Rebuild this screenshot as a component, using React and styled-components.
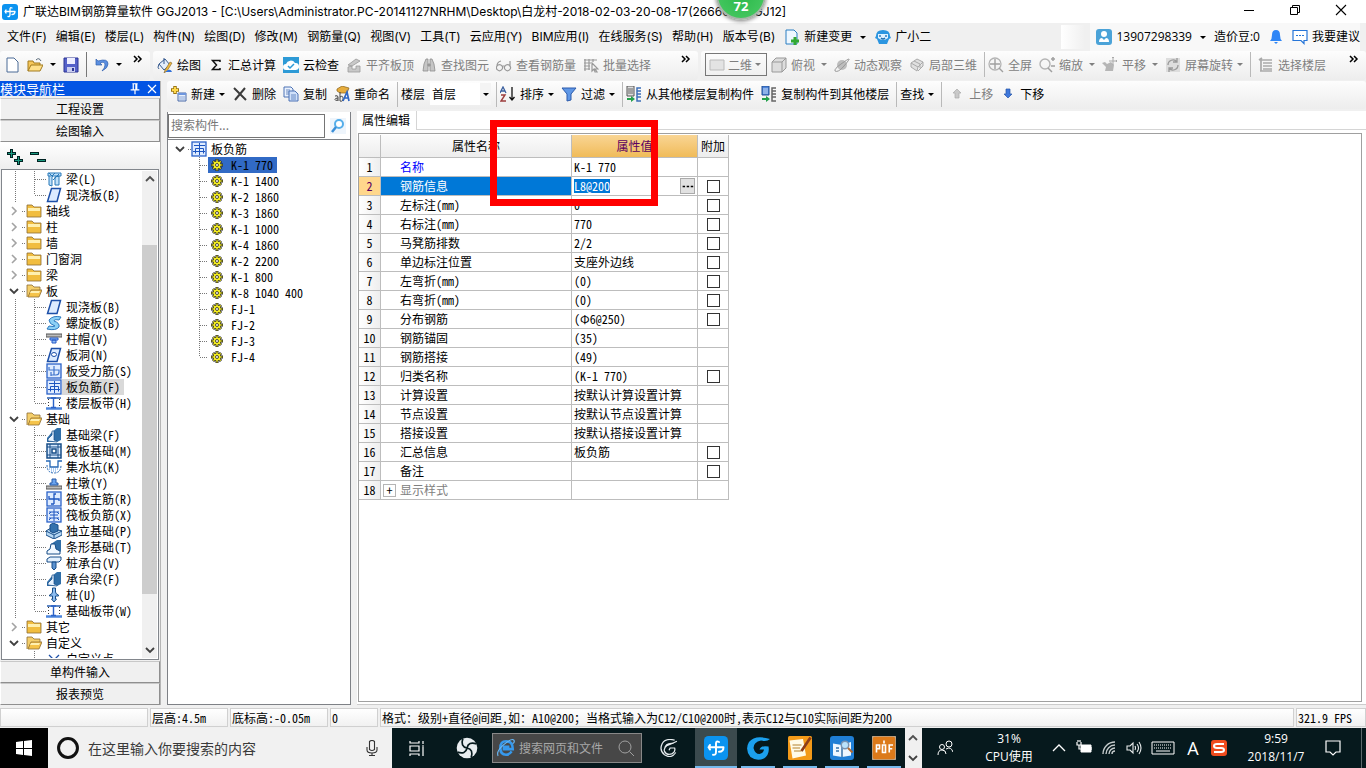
import { useState } from 'react'
import styled, { createGlobalStyle, css } from 'styled-components'

const fonts = {
  ui: '"Open Sans", "Noto Sans CJK SC", sans-serif',
  cjk: '"Noto Sans CJK SC", sans-serif',
  title: 'Inter, "Noto Sans CJK SC", sans-serif',
}

const GlobalStyle = createGlobalStyle`
  * { box-sizing: border-box; }
  body { margin: 0; background: #f0f0f0; overflow: hidden; }
  button, input, select {
    font: inherit;
    color: inherit;
    border: 0;
    padding: 0;
    margin: 0;
    background: none;
    border-radius: 0;
    outline: none;
  }
  ul { list-style: none; margin: 0; padding: 0; }
`

/* ---------- icons ---------- */

const slab = <path d="M5.500 1.500h9l-3.500 13H1.500z" fill="#dcebff" stroke="#1c4fa8" strokeWidth="1.500" />
const frame = <rect x="1" y="1" width="14" height="14" fill="#dfecff" stroke="#2a62c8" strokeWidth="1.300" />
const g = '#b4b4b4'

const drawings = {
  app: <><rect width="16" height="16" rx="3" fill="#0b93f0" /><path d="M10 4Q8 3 8 5v5.500Q8 13 6 12.500M3 7.500h10M4 6q-1.500 1.500 0 3M13 7.500q0 3-3 3" fill="none" stroke="#fff" strokeWidth="1.300" strokeLinecap="round" strokeLinejoin="round" /></>,
  file: <path d="M3 1h7l4 4v10H3z" fill="#fff" stroke="#4b6a96" />,
  open: <><path d="M1 14V4h5l1 2h6v3" fill="#f6c75a" stroke="#a17a1e" /><path d="M1 14l3-6h12l-3 6z" fill="#ffe08a" stroke="#a17a1e" /><path d="M9 3q3-3 5 1" fill="none" stroke="#567" /></>,
  save: <><path d="M1 1h14v14H1z" fill="#5561c9" stroke="#2c3593" /><path d="M4 1h8v6H4z" fill="#eef" /><path d="M4 10h8v5H4z" fill="#c9cdf0" /><path d="M9 11h2v3H9z" fill="#2c3593" /></>,
  undo: <path d="M2 2v6h6L6 6q5-2 5 2 0 3-3 6 6-3 6-7 0-6-10-3z" fill="#5b8fe0" stroke="#2f5fae" strokeWidth=".7" />,
  paint: <><path d="M2 7l6-5 5 6-6 5z" fill="#e4eefb" stroke="#35598f" /><path d="M7 1v6M2 7q-2 4 0 5" fill="none" stroke="#35598f" /><path d="M15 6l-5 8-3 2 1-3 5-8z" fill="#f0b93c" stroke="#7d5f2a" strokeWidth=".6" /><path d="M11 13q3-1 4 2H8z" fill="#2f6fd8" /></>,
  sigma: <path d="M12 5V3.500H4.500L8.500 8l-4 4.500H12V11" fill="none" stroke="#111" strokeWidth="1.500" />,
  cloud: <><path d="M0 0h16v16H0z" fill="#2d9ad6" /><path d="M3 13a3 3 0 0 1 0-6 5 5 0 0 1 9-1 3.500 3.500 0 0 1 1 7z" fill="#fff" /><path d="M5 9l2 2 4-4" fill="none" stroke="#2d9ad6" strokeWidth="1.500" /></>,
  align: <path d="M2 8l8-6 4 2-8 5zM2 10v5h12V9h-4v3H6v-3z" fill="#c8c8c8" stroke="#999" strokeWidth=".8" />,
  binoc: <path d="M2 14l1-7 2-5h2v12zM9 14V2h2l2 5 1 7zM7 7h2v2H7z" fill="#c6c6c6" stroke="#8d8d8d" strokeWidth=".8" />,
  glasses: <path d="M5 4Q1 5 1 9a3 3 0 1 0 5 0 3 3 0 0 0-5 0M9 9a3 3 0 1 0 5 0 3 3 0 0 0-5 0M14 10V4M6 9h3" fill="none" stroke="#999" strokeWidth="1.200" />,
  batch: <path d="M2 2v12M1 3h13M1 6h7M1 9h6M1 12h6M6 2v11M10 2v3M9 6l6 6-3 0 2 3-2 0-1-3-2 2z" fill="none" stroke="#999" strokeWidth="1.200" />,
  rect: <path d="M1 3h14v10H1z" fill="#e3e3e3" stroke="#bbb" />,
  cube: <path d="M1 5l4-4h10v10l-4 4H1zM1 5h10v10M11 5l4-4" fill="#ddd" stroke="#999" />,
  orbit: <><circle cx="8" cy="8" r="5" fill="#bdbdbd" /><path d="M1 14Q0 12 7 7T15 2t-5 7-9 5" fill="none" stroke="#999" /></>,
  cube2: <path d="M2 6l6-4 6 3-5 5zM2 6v4l6 4 1-4M9 14l5-5V5M5 4l6 3v4" fill="#e0e0e0" stroke="#aaa" />,
  full: <><circle cx="7" cy="7" r="6" fill="none" stroke={g} strokeWidth="1.300" /><path d="M7 2v10M2 7h10M11 11l4 4" stroke="#a0a0a0" strokeWidth="1.400" /></>,
  zoom: <><circle cx="6" cy="7" r="5" fill="none" stroke={g} strokeWidth="1.400" /><path d="M9 11l4 4M12 2h4M14 0v4M12 9h4" stroke="#a0a0a0" strokeWidth="1.500" /></>,
  pan: <><path d="M0 6l3-1 2 2 4-2 3 3-1 6H3l1-4z" fill="#b6b6b6" /><path d="M11 0v8M7 4h8M10 1l1-1 1 1M14 3l1 1-1 1" fill="none" stroke="#aaa" /></>,
  rotate: <><path d="M1 1h14v14H1z" fill="#ddd" /><path d="M3 8a5 5 0 0 1 9-3M13 8a5 5 0 0 1-9 3M12 1v4H8M4 15v-4h4" fill="none" stroke="#999" strokeWidth="1.300" /></>,
  floors: <path d="M3 3h11M1 3l3-2M5 6h9M5 9h9M5 12h9M2 14h12M3 3v11" stroke="#aaa" strokeWidth="1.700" fill="none" />,
  create: <><path d="M4 0v8M0 4h8" stroke="#9a7510" strokeWidth="3.500" /><path d="M4 1v6M1 4h6" stroke="#ffd84a" strokeWidth="2" /><path d="M7 7h8v8H7z" fill="#e8f0fc" stroke="#4a6ba8" /><path d="M7 7h8v2H7z" fill="#6e96de" /><path d="M8 11h6M8 13h6" stroke="#8aa6d8" /></>,
  cross: <path d="M2 2l12 12M13 2L3 14" stroke="#3c3c3c" strokeWidth="2" />,
  copy: <><path d="M1 1h7l2 2v8H1z" fill="#e9f1fd" stroke="#4d73b5" /><path d="M6 5h6l3 3v7H6z" fill="#cfe0fa" stroke="#4d73b5" /><path d="M8 9h5M8 11h5M8 13h5M3 4h4M3 6h3M3 8h3" stroke="#4d73b5" strokeWidth=".8" /></>,
  rename: <><path d="M3 3l5-3 7 2-2 5-7 0-3-2z" fill="#e7ad3d" stroke="#866018" strokeWidth=".7" /><path d="M1 10q3-1 3 1v4M4 12q-3 0-3 1.500T4 14M6 6v9M6 11q3-2 3 1.500T6 15" fill="none" stroke="#444" /><path d="M9 15l4-9 2 9M10 12h5" fill="none" stroke="#2f66c4" strokeWidth="1.700" /></>,
  sort: <><path d="M0 7l3-6 3 6M1 5h4" fill="none" stroke="#3a5f9e" strokeWidth="1.300" /><path d="M1 9h4l-4 6h5" fill="none" stroke="#9c3d3d" strokeWidth="1.400" /><path d="M12 1v12M9.500 11l2.500 3 2.500-3" fill="none" stroke="#111" strokeWidth="1.300" /></>,
  filter: <path d="M1 2h14L10 8v6l-4 1V8z" fill="#5f97e6" stroke="#2c5bab" />,
  from: <><path d="M1 0h7v10H1z" fill="#ddd" stroke="#555" /><path d="M2 3h5M2 5h5M2 7h5" stroke="#666" /><path d="M15 2h-4v13h4M11 5h4M11 8h4M11 11h4" fill="none" stroke="#3d6fb8" strokeWidth="1.500" /><path d="M1 12h4v-2l4 3-4 3v-2H1z" fill="#23a04b" /></>,
  to: <><path d="M1 0h7v9H1z" fill="#4d84d8" stroke="#234e96" /><path d="M2 3h5M2 5h5M2 7h5" stroke="#cfe0fa" /><path d="M15 2h-4v13h4M11 5h4M11 8h4M11 11h4" fill="none" stroke="#666" strokeWidth="1.500" /><path d="M1 12h4v-2l4 3-4 3v-2H1z" fill="#23a04b" /></>,
  up: <path d="M8 3l4 4h-2v5H6V7H4z" fill="#c9c9c9" stroke="#aaa" strokeWidth=".7" />,
  down: <path d="M8 12l4-4h-2V3H6v5H4z" fill="#3f78dc" stroke="#2453a8" strokeWidth=".7" />,
  change: <><path d="M2 1h8l3 3v11H2z" fill="#eef7ff" stroke="#2b7ec2" /><path d="M11 8v8M7 12h8" stroke="#31a831" strokeWidth="3" /></>,
  robot: <><path d="M1 7Q1 1 8 1t7 6l1 2-2 1-2 5H4l-2-5-2-1z" fill="#2b95e0" /><path d="M3 5h10v4q-5 4-10 0z" fill="#dff1ff" /><path d="M5 6v2M11 6v2M6 9q2 2 4 0" stroke="#1c6cb0" fill="none" strokeWidth="1.300" /></>,
  user: <><rect width="16" height="16" rx="3" fill="#4ba3d8" /><circle cx="8" cy="5" r="3" fill="#fff" /><path d="M3 13q0-4 3-4l2 2 2-2q3 0 3 4z" fill="#fff" /></>,
  bell: <path d="M2 12q2-2 2-6 0-5 4-5t4 5q0 4 2 6zM6 13h4l-2 2z" fill="#2f86f6" />,
  bubble: <><path d="M1 1.500h14v10h-3v3l-3-3H1z" fill="#fff" stroke="#2675d8" strokeWidth="1.200" /><path d="M4 6.500h2M7 6.500h2M10 6.500h2" stroke="#2675d8" /></>,
  search: <><path d="M0 0h16v16H0z" fill="#eef5fc" /><circle cx="9" cy="6" r="4" fill="#fff" stroke="#55aeea" strokeWidth="2" /><path d="M6 9l-4 5" stroke="#3b8fd8" strokeWidth="2.500" /></>,
  folder: <><path d="M1 14V2h5l2 2h7v10z" fill="#f1bd3f" stroke="#8d6d33" strokeWidth=".8" /><path d="M2 5h12v3H2z" fill="#fff0b0" /></>,
  folderOpen: <><path d="M1 14V2h5l2 2h6v4" fill="#f5cf6b" stroke="#8d6d33" strokeWidth=".8" /><path d="M2 14l3-7h11l-3 7z" fill="#f5c34a" stroke="#8d6d33" strokeWidth=".8" /><path d="M5 8h9l-1 2H4z" fill="#fff0b0" /></>,
  beam: <><path d="M2 2h13v3H2zM3 5v9l3 1V6M9 14V6l4-1v9z" fill="#bfe0fa" stroke="#2878b8" /><path d="M3 2l4 4M9 2l-3 3M13 3L7 9" stroke="#2878b8" /></>,
  slab,
  spiral: <path d="M3 5Q7 0 15 2l-2 3q-5-1-5 1 6 2 5 6-3 4-12 2l2-3q5 1 6 0-6-2-6-6z" fill="#8cd0f5" stroke="#2b79c0" />,
  cap: <><path d="M0 3h16v3H0z" fill="#bbb" stroke="#555" /><path d="M4 7h8v2H4zM6 9h4v3H6z" fill="#8fbcf4" stroke="#2458c8" /></>,
  hole: <>{slab}<ellipse cx="8" cy="7.500" rx="2.500" ry="2" fill="#fff" stroke="#1c4fa8" /></>,
  rebarS: <>{frame}<path d="M8 3v9M3 4v3h10v2q0 3-3 3H5M5 9v4" fill="none" stroke="#3f74cc" strokeWidth="1.200" /></>,
  rebarF: <>{frame}<path d="M8.500 2v12M3 4.500h11M2 10.500h12M4.500 7.500h8v5M4.500 7.500v5" fill="none" stroke="#1c55c0" strokeWidth="1" /></>,
  rebarR: <>{frame}<path d="M10 3H8v10M3 5v3h10v2M5 13h3" fill="none" stroke="#1c55c0" strokeWidth="1.300" /></>,
  rebarX: <>{frame}<path d="M8 2v12M3 5h10M3 11h10M5 5l-2 2M11 5l2 2M5 11l-2 2M11 11l2 2M4 8h8" fill="none" stroke="#1c55c0" /></>,
  strip: <><path d="M1 3h14" stroke="#2a5fb0" strokeWidth="1.500" /><path d="M0 13.500h16" stroke="#4d86dc" strokeWidth="2.500" /><path d="M2.500 4v9M13.500 4v9" stroke="#333" strokeDasharray="1 2" /><path d="M5 3h5M7.500 3v10M5 12.500h5" stroke="#2a62c8" strokeWidth="1.400" /></>,
  fbeam: <><path d="M1 15v-4l5-6 5-4h4v12l-4 2z" fill="#2f6ea8" /><path d="M2 14v-2l4-4V4h2v9l3 1v1z" fill="#e8f3ff" stroke="#164c86" strokeWidth=".7" /></>,
  raft: <><path d="M1 1h14v14H1z" fill="#d8eaff" stroke="#174d88" strokeWidth="1.500" /><path d="M4 1v14M12 1v14M1 4h14M1 12h14" stroke="#174d88" /><path d="M6 6h4v4H6z" fill="#fff" stroke="#174d88" strokeWidth="1.500" /></>,
  pit: <><path d="M0 2h4v6h8V2h4" fill="none" stroke="#2467b5" strokeWidth="1.300" /><path d="M1 6q0 8 7 8t7-8" fill="none" stroke="#2467b5" strokeDasharray="2 1" /><path d="M3 10h10M5 12h6" stroke="#5d9ae8" strokeDasharray="1 1" /></>,
  pier: <><path d="M0 11h16v3H0z" fill="#bbb" stroke="#555" /><path d="M6 4h4v4h2v2H4V8h2z" fill="#6aa3ee" stroke="#2458a8" /></>,
  isolated: <><path d="M0 8l5-3 11 3v4l-8 4-8-4z" fill="#b7d8f4" stroke="#174d88" /><path d="M4 2l3-2 5 2v6l-5 2-3-2z" fill="#3572ad" stroke="#174d88" /><path d="M8 16v-4l8-4M0 8l8 4" fill="none" stroke="#174d88" /></>,
  stripbase: <><path d="M1 15v-3l4-3V5l6-4h4v11l-3 3z" fill="#2f6ea8" /><path d="M1 15v-3l3-2 1-5h4l1 5 4 2v3z" fill="#f0f8ff" stroke="#164c86" /></>,
  pilecap: <><path d="M1 4l3-2h11v3l-2 2H1z" fill="#e2f0fd" stroke="#174d88" /><path d="M6 7h4v6l-2 2-2-2z" fill="#5b92d0" stroke="#174d88" /></>,
  pile: <path d="M6.500 1h3v4q0 2 3 3v1h-3v3h1l-2.500 3-2.500-3h1V9h-3V8q3-1 3-3z" fill="#8bbcf0" stroke="#174d88" />,
  point: <path d="M3 4l5 5 5-5M3 14l5-5 5 5" stroke="#1c4fa8" strokeWidth="1.300" fill="none" />,
  gear: <><path d="M8 2v12M2 8h12M4 4l8 8M12 4l-8 8" stroke="#222" strokeWidth="3" /><circle cx="8" cy="8" r="4" fill="#f5ee20" stroke="#222" strokeWidth=".7" /><path d="M8 2.500v11M2.500 8h11M4.300 4.300l7.400 7.400M11.700 4.300l-7.400 7.400" stroke="#f5ee20" strokeWidth="1.200" /><circle cx="8" cy="8" r="1.500" fill="#fff" stroke="#222" strokeWidth=".8" /></>,
  addAll: <><path d="M4.500 0v9M0 4.500h9M11.500 7v9M7 11.500h9" stroke="#022" strokeWidth="3" /><path d="M4.500 1v7M1 4.500h7M11.500 8v7M8 11.500h7" stroke="#1a9a80" /></>,
  minusAll: <><path d="M0 4.500h9M7 11.500h9" stroke="#022" strokeWidth="3" /><path d="M1 4.500h7M8 11.500h7" stroke="#1a9a80" /></>,
  pin: <path d="M5 2h6M6 2v7M10 2v7M9 2v7M3 9h10M8 9v5" stroke="#fff" strokeWidth="1.400" />,
  close: <path d="M4 4l8 8M12 4l-8 8" stroke="currentColor" strokeWidth="1.200" />,
  winClose: <path d="M3 3l10 10M13 3L3 13" stroke="#000" strokeWidth="1.100" />,
  min: <path d="M3 8.500h10" stroke="#000" />,
  restore: <path d="M3.500 5.500h7v7h-7zM5.500 5V3.500h7v7H11" fill="none" stroke="#000" />,
  right: <path d="M6 4l4 4-4 4" fill="none" stroke="#a3a3a3" strokeWidth="1.600" />,
  chevDown: <path d="M4 6l4 4 4-4" fill="none" stroke="#404040" strokeWidth="1.800" />,
  chevUp: <path d="M4 10l4-4 4 4" fill="none" stroke="#505050" strokeWidth="1.800" />,
  more: <path d="M4 5l3 3-3 3M8 5l3 3-3 3" fill="none" stroke="#000" strokeWidth="1.500" />,
  dots: <path d="M2 7h3v2H2zM7 7h3v2H7zM12 7h3v2h-3z" fill="#000" />,
  windows: <path d="M0 2l7-1v7H0zM8 1l8-1v8H8zM0 9h7v6l-7-1zM8 9h8v7l-8-1z" fill="#fff" />,
  ring: <circle cx="8" cy="8" r="6.300" fill="none" stroke="#111" strokeWidth="2" />,
  mic: <path d="M5.500 1.500q2.500-2 5 0v8q-2.500 2-5 0zM3 7v3q0 3 5 3t5-3V7M8 13v3M5 15.500h6" fill="none" stroke="#333" strokeWidth="1.100" />,
  taskview: <path d="M1 1v2h9V1M1 6h9v5H1zM1 16v-2h9v2M14 1v3M14 7v9M13 6h2" fill="none" stroke="#fff" strokeWidth="1.200" />,
  fan: <><circle cx="8" cy="8" r="7.500" fill="#e9edf0" /><path d="M8 8Q3 7 5 1M8 8q1-5 7-3M8 8q5 1 3 7M8 8q-1 5-7 3" fill="none" stroke="#06191d" strokeWidth="1.200" /></>,
  ie: <><path d="M13 11q-2 3-5 3-5 0-5-6t5-6q6 0 6 7H5M5 7h6" fill="none" stroke="#3799ec" strokeWidth="2.300" /><path d="M1 15Q-1 11 6 5t9-4q1 2-1 3" fill="none" stroke="#69baf8" /></>,
  lens: <><circle cx="7" cy="7" r="6" fill="none" stroke="#a0a0a0" /><path d="M11.500 11.500L16 16" stroke="#a0a0a0" /></>,
  swirl: <path d="M15 2Q9 5 6 6q-3 2-2 5 2 4 7 2 3-2 2-5H9l-1 2M13 1Q5-1 2 4q-3 6 2 10 6 4 10-2M12 4Q5 3 4 9" fill="none" stroke="#e6ebee" strokeWidth="1.100" />,
  swirlBlue: <path d="M16 2Q14 4 10 3 5 4 5 8q1 4 4 4 3-1 3-3H9q1-3 6-2 1 5-3 8-5 2-9-1-4-5-1-10Q6-1 16 2z" fill="#1ba0ee" />,
  note: <><rect width="16" height="16" rx="1" fill="#f39a19" /><path d="M1 3l9-1 2 11-9 2z" fill="#fffbe8" /><path d="M3 6h6M3 8h5M4 10h5" stroke="#b3822e" strokeWidth=".8" /><path d="M15 1L9 10" stroke="#8d3c18" strokeWidth="1.800" /></>,
  book: <><rect width="16" height="16" rx="2" fill="#1f7fd6" /><path d="M2 5l6 1 6-2v9l-6 1-6-1z" fill="#edf7ff" /><path d="M8 6v8M4 8h2M4 10h2" stroke="#3473aa" /><circle cx="10" cy="6" r="2.500" fill="#b9e2fc" stroke="#7a93b0" /><path d="M12 8l3 3" stroke="#b46a30" strokeWidth="1.300" /></>,
  pdf: <><rect width="16" height="16" rx="2" fill="#dc7a1a" stroke="#b9a58c" /><path d="M3 11V6h2v2.500H3M7 6v5h2V6zM11.500 11V6H14M11.500 8.500h2M8 3v2" stroke="#fff" fill="none" strokeWidth="1.100" /></>,
  people: <><circle cx="5" cy="7" r="2.500" fill="none" stroke="#fff" /><circle cx="12" cy="4" r="3" fill="none" stroke="#fff" /><path d="M1 15q0-5 4-5t4 4M9 9q5-3 7 3" fill="none" stroke="#fff" /></>,
  tray: <path d="M2 11l6-6 6 6" fill="none" stroke="#fff" strokeWidth="1.300" />,
  battery: <><path d="M5 5h10v7H5z" fill="#fff" stroke="#fff" /><path d="M1 2v3h4V2M2 0v2M4 0v2M3 5v4h3M16 7v3" fill="none" stroke="#fff" strokeWidth="1.200" /></>,
  wifi: <path d="M2 14A12 12 0 0 1 14 2M5 14a9 9 0 0 1 9-9M8 14a6 6 0 0 1 6-6M11 14a3 3 0 0 1 3-3" fill="none" stroke="#c5cbcc" strokeWidth="1.400" />,
  volume: <path d="M1 6h3l3-3v10l-3-3H1zM9 6q1 2 0 4M11 4q3 4 0 8M13 2q4 6 0 12" fill="none" stroke="#e8ecec" strokeWidth="1.100" />,
  sogou: <><rect width="16" height="16" rx="3" fill="#f04c1e" /><path d="M13 4H6Q3 4 3 6t3 2h4q3 0 3 2t-3 2H3" fill="none" stroke="#fff" strokeWidth="2" /></>,
  notice: <path d="M1 1h14v11h-4l-3 3-3-3H1z" fill="none" stroke="#fff" strokeWidth="1.200" />,
}

const Svg = styled.svg`
  display: block;
  flex: none;
  width: ${p => p.$size}px;
  height: ${p => p.$size}px;
`

function Icon({ name, size = 16 }) {
  return <Svg viewBox="0 0 16 16" $size={size} aria-hidden="true">{drawings[name]}</Svg>
}

/* ---------- shell ---------- */

const Page = styled.div`
  display: flex;
  flex-direction: column;
  height: 100vh;
  font: 12px/16px ${fonts.cjk};
  color: #000;
  white-space: nowrap;
  cursor: default;
`

const TitleBar = styled.header`
  flex: none;
  position: relative;
  display: flex;
  align-items: center;
  gap: 5px;
  height: 23px;
  padding: 0 17px 0 2px;
  background: #fff;
  font-family: ${fonts.title};
`

const Title = styled.span`
  flex: 1;
`

const WindowButtons = styled.div`
  display: flex;
  gap: 30px;
  align-self: flex-start;
  padding-top: 2px;
`

const SpeedBall = styled.div`
  position: absolute;
  left: 716px;
  top: -30px;
  width: 50px;
  height: 50px;
  padding-top: 26px;
  border: 2px solid #a6b5a8;
  border-radius: 50%;
  background: radial-gradient(#2bb84a, #4bcb65);
  box-shadow: 0 1px 4px #777;
  color: #fff;
  text-align: center;
  font: bold 13px/16px ${fonts.ui};
`

const MenuBar = styled.nav`
  flex: none;
  display: flex;
  align-items: center;
  gap: 9px;
  height: 28px;
  padding: 0 6px 0 7px;
  background: #f0f0f0;
  font-family: ${fonts.title};
`

const MenuButton = styled.button`
  display: flex;
  align-items: center;
  gap: 4px;
`

const Spacer = styled.div`
  flex: 1;
`

const Account = styled.div`
  display: flex;
  align-items: center;
  align-self: stretch;
  gap: 8px;
  padding-left: 6px;
  background: #f8f8f8;
  font-family: ${fonts.ui};
`

const Fade = styled.div`
  align-self: stretch;
  width: 24px;
  margin: 2px -4px 2px 0;
  background: linear-gradient(90deg, #fff, #f0f0f0);
`

const Strip = styled.div`
  flex: none;
  display: flex;
  height: 30px;
  background: #f0f0f0;
`

const ToolGroup = styled.div`
  display: flex;
  flex: ${p => (p.$grow ? 1 : 'none')};
  align-items: center;
  gap: 7px;
  min-width: 0;
  width: ${p => (p.$width ? p.$width + 'px' : 'auto')};
  height: ${p => p.$height || 29}px;
  padding: 0 4px 2px;
  margin-right: ${p => (p.$grow ? 0 : 3)}px;
  border-radius: 3px;
  background: linear-gradient(#fdfdfd, #ededed);
`

const Tool = styled.button`
  display: flex;
  flex: none;
  align-items: center;
  gap: 4px;
  ${p => p.disabled && css`color: #7f7f7f;`}
`

const Caret = styled.i`
  flex: none;
  border: 3px solid transparent;
  border-top-color: currentColor;
  border-bottom: 0;
  margin-left: ${p => p.$gap || 0}px;
`

const Divider = styled.i`
  flex: none;
  width: 1px;
  height: 25px;
  margin-right: ${p => (p.$tight ? -4 : 0)}px;
  background: ${p => (p.$dark ? '#777' : '#b9b9b9')};
`

const MoreButton = styled.button`
  align-self: flex-start;
  margin-left: auto;
`

const ViewSelect = styled.label`
  display: flex;
  flex: none;
  align-items: center;
  gap: 3px;
  width: 62px;
  height: 23px;
  padding: 0 5px 0 3px;
  margin-right: -3px;
  border: 1px solid #777;
  color: #7f7f7f;
`

const PlainSelect = styled.select`
  appearance: none;
  flex: 1;
  min-width: 0;
  height: 20px;
  line-height: 16px;
`

const FloorSelect = styled.label`
  display: flex;
  flex: none;
  align-items: center;
  width: 61px;
  height: 22px;
  margin: 0 -2px;
  padding-left: 2px;
  background: #fff;
`

const SelectArrow = styled.span`
  display: grid;
  place-items: center;
  width: 11px;
  height: 22px;
  background: #f4f4f4;
`

const Body = styled.div`
  flex: 1;
  display: flex;
  min-height: 0;
  gap: 6px;
  padding-bottom: 3px;
`

/* ---------- navigation column ---------- */

const Side = styled.aside`
  flex: none;
  display: flex;
  flex-direction: column;
  width: 161px;
  border-right: 1px solid #b5b5b5;
`

const SideTitle = styled.div`
  flex: none;
  display: flex;
  align-items: center;
  gap: 2px;
  height: 15px;
  color: #fff;
  background: #0355e4;
  margin-bottom: 2px;
  span { flex: 1; font-size: 13px; }
`

const SideButton = styled.button`
  flex: none;
  height: 22px;
  border: 1px solid #8f8f8f;
  border-top-color: #c8c8c8;
  border-left-color: #fff;
  background: #f0f0f0;
`

const SideTools = styled.div`
  flex: none;
  display: flex;
  align-items: center;
  gap: 7px;
  height: 27px;
  padding: 2px 7px 0;
  background: linear-gradient(#fff, #eee);
`

const NavBox = styled.div`
  flex: 1;
  display: flex;
  min-height: 0;
  margin: 0 1px 1px;
  padding: 1px 1px 1px 4px;
  border: 1px solid #82868c;
  background: #fff;
`

const treeFont = css`
  font-feature-settings: "hwid" 1;
`

const NavList = styled.ul`
  flex: 1;
  overflow: hidden;
  ${treeFont}
`

const dotsX = css`
  background: repeating-linear-gradient(90deg, #777 0 1px, transparent 1px 2px);
`
const dotsY = css`
  background: repeating-linear-gradient(#777 0 1px, transparent 1px 2px);
`

const NavRow = styled.li`
  display: flex;
  align-items: center;
  height: 16px;
`

const Stub = styled.i`
  flex: none;
  width: ${p => p.$w}px;
  height: 1px;
  ${dotsX}
`

const Rail = styled.i`
  flex: none;
  align-self: ${p => (p.$last ? 'flex-start' : 'stretch')};
  width: 1px;
  height: ${p => (p.$last ? 8 : 16)}px;
  margin-left: ${p => p.$x}px;
  ${p => !p.$hidden && dotsY}
`

const Expander = styled.button`
  flex: none;
  width: 16px;
  height: 16px;
`

const NavLabel = styled.span`
  flex: none;
  height: 16px;
  padding: 0 4px;
  background: ${p => (p.$on ? '#d9d9d9' : 'transparent')};
`

const ScrollBar = styled.div`
  flex: none;
  display: flex;
  flex-direction: column;
  width: 15px;
  background: #f0f0f0;
`

const Track = styled.div`
  flex: 1;
  display: grid;
  grid-template-rows: 58fr 348fr 48fr;
`

const Thumb = styled.div`
  grid-row: 2;
  background: #cdcdcd;
`

/* ---------- component list ---------- */

const Main = styled.main`
  flex: 1;
  display: flex;
  flex-direction: column;
  min-width: 0;
`

const Panels = styled.div`
  flex: 1;
  display: flex;
  min-height: 0;
`

const ListPanel = styled.section`
  flex: none;
  display: flex;
  flex-direction: column;
  width: 184px;
  margin-top: 1px;
  border: 1px solid #7e8186;
  border-top: 0;
`

const SearchRow = styled.div`
  flex: none;
  display: flex;
  align-items: center;
  gap: 5px;
  height: 27px;
  background: #fff;
`

const SearchInput = styled.input`
  width: 157px;
  height: 24px;
  padding: 0 2px 2px;
  border: 1px solid #757575;
  background: #fff;
  &::placeholder { color: #777; opacity: 1; }
`

const ItemList = styled.ul`
  flex: 1;
  padding: 1px 0 0 4px;
  border-top: 1px solid #7e8186;
  background: #fff;
  ${treeFont}
`

const ItemLabel = styled.span`
  display: flex;
  align-items: center;
  gap: 6px;
  height: 16px;
  padding: 0 4px 0 1px;
  background: ${p => (p.$on ? '#316ac5' : 'transparent')};
`

/* ---------- property editor ---------- */

const Editor = styled.section`
  flex: 1;
  display: flex;
  flex-direction: column;
  min-width: 0;
  margin-left: 6px;
  background: #fff;
  border-bottom: 1px solid #ccc;
`

const Tabs = styled.div`
  flex: none;
  display: flex;
  height: 19px;
  border-bottom: 1px solid #d5d5d5;
`

const Tab = styled.button`
  height: 19px;
  padding: 0 6px 2px 5px;
  border-right: 1px solid #d5d5d5;
  background: #fff;
`

const Sheet = styled.div`
  flex: 1;
  position: relative;
  margin: 3px 4px 2px 1px;
  border: 1px solid #a0a0a0;
`

const Table = styled.table`
  margin-top: 1px;
  border-collapse: separate;
  border-spacing: 0;
  table-layout: fixed;
  width: 370px;
  ${treeFont}
  th, td {
    height: 19px;
    padding: 0;
    border: solid #bdbdbd;
    border-width: 0 1px 1px 0;
    font-weight: normal;
    text-align: left;
    overflow: hidden;
    line-height: 16px;
  }
  thead th {
    height: 23px;
    text-align: center;
    background: linear-gradient(#fbfbfb, #ededed);
  }
  thead th.active {
    color: #5b0060;
    background: linear-gradient(#f9d594, #f0bb59);
  }
`

const NumberCell = styled.th`
  && {
    text-align: center;
    background: ${p => (p.$on ? '#ffd78c' : 'linear-gradient(90deg, #fff, #eee)')};
    color: ${p => (p.$on ? '#5b0060' : '#000')};
  }
`

const NameCell = styled.td`
  && {
    padding-left: ${p => (p.$group ? 2 : 19)}px;
    color: ${p => p.$color || '#000'};
    background: ${p => (p.$on ? '#0078d7' : '#fff')};
  }
`

const GroupName = styled.span`
  display: flex;
  align-items: center;
  gap: 4px;
`

const PlusButton = styled.button`
  width: 13px;
  height: 13px;
  border: 1px solid #b5b5b5;
  line-height: 10px;
  color: #000;
  background: #fff;
`

const ValueCell = styled.td`
  && { padding: 0 2px; }
`

const EditBox = styled.div`
  display: flex;
  align-items: center;
  justify-content: space-between;
  mark { height: 14px; line-height: 14px; background: #0078d7; color: #fff; }
`

const DotsButton = styled.button`
  display: grid;
  place-items: center;
  width: 15px;
  height: 16px;
  border: 1px solid #aaa;
  background: #e1e1e1;
`

const Check = styled.input`
  appearance: none;
  display: block;
  width: 13px;
  height: 13px;
  margin: 1px auto 0;
  border: 1px solid #333;
  background: #fff;
  &:checked { background: #333; }
`

/* hangs over the sheet's top edge */
const RedBox = styled.div`
  position: absolute;
  left: 131px;
  top: -14px;
  width: 168px;
  height: 86px;
  border: 7px solid #f00;
  pointer-events: none;
`

const StatusBar = styled.footer`
  flex: none;
  display: grid;
  grid-template-columns: 148px 78px 98px 48px 1fr 70px;
  gap: 2px;
  height: 20px;
  background: #f0f0f0;
  ${treeFont}
`

const StatusCell = styled.div`
  height: 19px;
  padding-left: 1px;
  border: 1px solid #d0d0d0;
  background: linear-gradient(#fff, #f1f1f1);
  line-height: 18px;
  overflow: hidden;
`

/* ---------- task bar ---------- */

const TaskBar = styled.footer`
  flex: none;
  display: flex;
  height: 40px;
  color: #fff;
  background: #06191d;
`

const StartButton = styled.button`
  display: grid;
  place-items: center;
  width: 48px;
  background: #000;
`

const CortanaBox = styled.label`
  display: flex;
  align-items: center;
  gap: 8px;
  width: 344px;
  padding: 0 12px 0 8px;
  background: #f1f1f1;
`

const CortanaInput = styled.input`
  flex: 1;
  min-width: 0;
  font-size: 14px;
  &::placeholder { color: #3a3a3a; opacity: 1; }
`

const TaskButton = styled.button`
  display: grid;
  place-items: center;
  width: ${p => p.$w || 42}px;
  ${p => p.$on && css`background: #3b4a4e;`}
  ${p => p.$open && css`
    background-image: linear-gradient(#76b9ed, #76b9ed);
    background-position: center bottom;
    background-repeat: no-repeat;
    background-size: ${p.$on ? 42 : 34}px 2px;
  `}
`

const WebSearch = styled.label`
  display: flex;
  align-items: center;
  align-self: center;
  gap: 4px;
  width: 150px;
  height: 30px;
  padding: 0 7px 0 4px;
  border: 1px solid #888;
  background: #474747;
`

const WebInput = styled.input`
  flex: 1;
  min-width: 0;
  &::placeholder { color: #a8a8a8; opacity: 1; }
`

const TaskScroll = styled.div`
  display: flex;
  flex-direction: column;
  justify-content: space-between;
  width: 17px;
  padding: 2px 0;
  background: #f0f0f0;
`

const Tray = styled.div`
  flex: 1;
  display: flex;
  align-items: center;
  justify-content: flex-end;
  gap: 9px;
  padding-right: 4px;
  font-family: ${fonts.ui};
`

const TwoLines = styled.div`
  width: ${p => p.$w}px;
  text-align: center;
  line-height: 18px;
`

const ImeMode = styled.span`
  width: 18px;
  font-size: 18px;
  text-align: center;
`

const ShowDesktop = styled.button`
  align-self: stretch;
  width: 1px;
  margin-left: 11px;
  background: #5c696c;
`

/* ---------- data ---------- */

const menus = ['文件(F)', '编辑(E)', '楼层(L)', '构件(N)', '绘图(D)', '修改(M)', '钢筋量(Q)', '视图(V)', '工具(T)', '云应用(Y)', 'BIM应用(I)', '在线服务(S)', '帮助(H)', '版本号(B)']

const drawTools = [
  ['paint', '绘图'],
  ['sigma', '汇总计算'],
  ['cloud', '云检查'],
  ['align', '平齐板顶', true],
  ['binoc', '查找图元', true],
  ['glasses', '查看钢筋量', true],
  ['batch', '批量选择', true],
]

const navTree = [
  { kind: 'child', icon: 'beam', label: '梁(L)' },
  { kind: 'child', icon: 'slab', label: '现浇板(B)', last: true },
  { kind: 'folder', label: '轴线' },
  { kind: 'folder', label: '柱' },
  { kind: 'folder', label: '墙' },
  { kind: 'folder', label: '门窗洞' },
  { kind: 'folder', label: '梁' },
  { kind: 'folder', label: '板', open: true },
  { kind: 'child', icon: 'slab', label: '现浇板(B)' },
  { kind: 'child', icon: 'spiral', label: '螺旋板(B)' },
  { kind: 'child', icon: 'cap', label: '柱帽(V)' },
  { kind: 'child', icon: 'hole', label: '板洞(N)' },
  { kind: 'child', icon: 'rebarS', label: '板受力筋(S)' },
  { kind: 'child', icon: 'rebarF', label: '板负筋(F)', on: true },
  { kind: 'child', icon: 'strip', label: '楼层板带(H)', last: true },
  { kind: 'folder', label: '基础', open: true },
  { kind: 'child', icon: 'fbeam', label: '基础梁(F)' },
  { kind: 'child', icon: 'raft', label: '筏板基础(M)' },
  { kind: 'child', icon: 'pit', label: '集水坑(K)' },
  { kind: 'child', icon: 'pier', label: '柱墩(Y)' },
  { kind: 'child', icon: 'rebarR', label: '筏板主筋(R)' },
  { kind: 'child', icon: 'rebarX', label: '筏板负筋(X)' },
  { kind: 'child', icon: 'isolated', label: '独立基础(P)' },
  { kind: 'child', icon: 'stripbase', label: '条形基础(T)' },
  { kind: 'child', icon: 'pilecap', label: '桩承台(V)' },
  { kind: 'child', icon: 'fbeam', label: '承台梁(F)' },
  { kind: 'child', icon: 'pile', label: '桩(U)' },
  { kind: 'child', icon: 'strip', label: '基础板带(W)', last: true },
  { kind: 'folder', label: '其它' },
  { kind: 'folder', label: '自定义', open: true },
  { kind: 'child', icon: 'point', label: '自定义点', noRail: true },
]

const items = ['K-1 770', 'K-1 1400', 'K-2 1860', 'K-3 1860', 'K-1 1000', 'K-4 1860', 'K-2 2200', 'K-1 800', 'K-8 1040 400', 'FJ-1', 'FJ-2', 'FJ-3', 'FJ-4']

const properties = [
  { name: '名称', value: 'K-1 770', color: '#00f' },
  { name: '钢筋信息', value: 'L8@200', check: true, on: true },
  { name: '左标注(mm)', value: '0', check: true },
  { name: '右标注(mm)', value: '770', check: true },
  { name: '马凳筋排数', value: '2/2', check: true },
  { name: '单边标注位置', value: '支座外边线', check: true },
  { name: '左弯折(mm)', value: '(0)', check: true },
  { name: '右弯折(mm)', value: '(0)', check: true },
  { name: '分布钢筋', value: '(Φ6@250)', check: true },
  { name: '钢筋锚固', value: '(35)' },
  { name: '钢筋搭接', value: '(49)' },
  { name: '归类名称', value: '(K-1 770)', check: true },
  { name: '计算设置', value: '按默认计算设置计算' },
  { name: '节点设置', value: '按默认节点设置计算' },
  { name: '搭接设置', value: '按默认搭接设置计算' },
  { name: '汇总信息', value: '板负筋', check: true },
  { name: '备注', value: '', check: true },
  { name: '显示样式', value: '', color: '#808080', group: true },
]

/* ---------- parts ---------- */

function ToolItem({ icon, label, disabled, caret }) {
  return (
    <Tool disabled={disabled}>
      {icon && <Icon name={icon} />}
      {label}
      {caret !== undefined && <Caret $gap={caret} />}
    </Tool>
  )
}

function NavItem({ item }) {
  if (item.kind === 'folder') {
    return (
      <NavRow>
        <Expander aria-label={item.label}><Icon name={item.open ? 'chevDown' : 'right'} /></Expander>
        <Stub $w={4} />
        <Icon name={item.open ? 'folderOpen' : 'folder'} />
        <NavLabel>{item.label}</NavLabel>
      </NavRow>
    )
  }
  return (
    <NavRow>
      <Rail $x={9} $hidden={item.noRail} />
      <Rail $x={18} $last={item.last} />
      <Stub $w={11} />
      <Icon name={item.icon} />
      <NavLabel $on={item.on}>{item.label}</NavLabel>
    </NavRow>
  )
}

function Navigator() {
  return (
    <Side>
      <SideTitle>
        <span>模块导航栏</span>
        <Icon name="pin" size={14} />
        <Icon name="close" />
      </SideTitle>
      <SideButton>工程设置</SideButton>
      <SideButton>绘图输入</SideButton>
      <SideTools>
        <Tool aria-label="展开"><Icon name="addAll" /></Tool>
        <Tool aria-label="折叠"><Icon name="minusAll" /></Tool>
      </SideTools>
      <NavBox>
        <NavList>
          {navTree.map((item, i) => <NavItem key={i} item={item} />)}
        </NavList>
        <ScrollBar>
          <Icon name="chevUp" />
          <Track><Thumb /></Track>
          <Icon name="chevDown" />
        </ScrollBar>
      </NavBox>
      <SideButton>单构件输入</SideButton>
      <SideButton>报表预览</SideButton>
    </Side>
  )
}

function ComponentList() {
  const [selected, setSelected] = useState(0)

  return (
    <ListPanel>
      <SearchRow>
        <SearchInput aria-label="搜索构件" placeholder="搜索构件..." />
        <Icon name="search" />
      </SearchRow>
      <ItemList>
        <NavRow>
          <Expander aria-label="板负筋"><Icon name="chevDown" /></Expander>
          <Stub $w={3} />
          <Icon name="rebarF" />
          <NavLabel>板负筋</NavLabel>
        </NavRow>
        {items.map((item, i) => (
          <NavRow key={i} onClick={() => setSelected(i)}>
            <Rail $x={27} $last={i === items.length - 1} />
            <Stub $w={8} />
            <ItemLabel $on={i === selected}><Icon name="gear" />{item}</ItemLabel>
          </NavRow>
        ))}
      </ItemList>
    </ListPanel>
  )
}

function PropertyTable() {
  return (
    <Table>
      <colgroup>
        <col width="22" />
        <col width="191" />
        <col width="126" />
        <col width="31" />
      </colgroup>
      <thead>
        <tr>
          <th></th>
          <th>属性名称</th>
          <th className="active">属性值</th>
          <th>附加</th>
        </tr>
      </thead>
      <tbody>
        {properties.map((row, i) => (
          <tr key={i}>
            <NumberCell $on={row.on}>{i + 1}</NumberCell>
            <NameCell $on={row.on} $group={row.group} $color={row.on ? '#fff' : row.color}>
              {row.group
                ? <GroupName><PlusButton>+</PlusButton>{row.name}</GroupName>
                : row.name}
            </NameCell>
            <ValueCell>
              {row.on
                ? <EditBox><mark>{row.value}</mark><DotsButton aria-label="选择"><Icon name="dots" size={13} /></DotsButton></EditBox>
                : row.value}
            </ValueCell>
            <td>{row.check && <Check type="checkbox" aria-label={row.name} />}</td>
          </tr>
        ))}
      </tbody>
    </Table>
  )
}

function Keyboard() {
  return (
    <svg width="24" height="14" viewBox="0 0 24 14" aria-hidden="true">
      <path d="M1 1h22v12H1z" fill="none" stroke="#fff" />
      <path d="M3 4h18M3 7h18" stroke="#fff" strokeDasharray="1 1" />
      <path d="M5 10h14" stroke="#fff" />
    </svg>
  )
}

function App() {
  return (
    <Page>
      <GlobalStyle />
      <TitleBar>
        <Icon name="app" />
        <Title>广联达BIM钢筋算量软件 GGJ2013 - [C:\Users\Administrator.PC-20141127NRHM\Desktop\白龙村-2018-02-03-20-08-17(266666).GGJ12]</Title>
        <WindowButtons>
          <Tool aria-label="最小化"><Icon name="min" /></Tool>
          <Tool aria-label="还原"><Icon name="restore" /></Tool>
          <Tool aria-label="关闭"><Icon name="winClose" /></Tool>
        </WindowButtons>
        <SpeedBall>72</SpeedBall>
      </TitleBar>

      <MenuBar>
        {menus.map(menu => <MenuButton key={menu}>{menu}</MenuButton>)}
        <MenuButton><Icon name="change" />新建变更<Caret $gap={4} /></MenuButton>
        <MenuButton><Icon name="robot" />广小二</MenuButton>
        <Spacer />
        <Fade />
        <Account>
          <MenuButton><Icon name="user" />13907298339<Caret $gap={4} /></MenuButton>
          <span>造价豆:0</span>
          <Icon name="bell" />
          <MenuButton><Icon name="bubble" />我要建议</MenuButton>
        </Account>
      </MenuBar>

      <Strip>
        <ToolGroup $width={150}>
          <Tool aria-label="新建"><Icon name="file" /></Tool>
          <ToolItem icon="open" caret={3} />
          <Tool aria-label="保存"><Icon name="save" /></Tool>
          <Divider $dark />
          <ToolItem icon="undo" caret={2} />
          <MoreButton aria-label="更多"><Icon name="more" /></MoreButton>
        </ToolGroup>
        <ToolGroup $width={545}>
          {drawTools.map(([icon, label, disabled]) => (
            <ToolItem key={label} icon={icon} label={label} disabled={disabled} />
          ))}
          <MoreButton aria-label="更多"><Icon name="more" /></MoreButton>
        </ToolGroup>
        <ToolGroup $grow>
          <ViewSelect>
            <Icon name="rect" />
            <PlainSelect aria-label="视图"><option>二维</option></PlainSelect>
            <Caret />
          </ViewSelect>
          <ToolItem icon="cube" label="俯视" disabled caret={2} />
          <ToolItem icon="orbit" label="动态观察" disabled />
          <ToolItem icon="cube2" label="局部三维" disabled />
          <Divider $tight />
          <ToolItem icon="full" label="全屏" disabled />
          <ToolItem icon="zoom" label="缩放" disabled caret={2} />
          <ToolItem icon="pan" label="平移" disabled caret={2} />
          <ToolItem icon="rotate" label="屏幕旋转" disabled caret={0} />
          <Divider />
          <ToolItem icon="floors" label="选择楼层" disabled />
          <MoreButton aria-label="更多"><Icon name="more" /></MoreButton>
        </ToolGroup>
      </Strip>

      <Body>
        <Navigator />
        <Main>
          <Strip>
            <ToolGroup $grow $height={28}>
              <ToolItem icon="create" label="新建" caret={0} />
              <ToolItem icon="cross" label="删除" />
              <ToolItem icon="copy" label="复制" />
              <ToolItem icon="rename" label="重命名" />
              <Divider $tight />
              <span>楼层</span>
              <FloorSelect>
                <PlainSelect aria-label="楼层"><option>首层</option></PlainSelect>
                <SelectArrow><Caret /></SelectArrow>
              </FloorSelect>
              <Divider $tight />
              <ToolItem icon="sort" label="排序" caret={0} />
              <ToolItem icon="filter" label="过滤" caret={0} />
              <Divider $tight />
              <ToolItem icon="from" label="从其他楼层复制构件" />
              <ToolItem icon="to" label="复制构件到其他楼层" />
              <Divider $tight />
              <ToolItem label="查找" caret={0} />
              <Divider />
              <ToolItem icon="up" label="上移" disabled />
              <ToolItem icon="down" label="下移" />
            </ToolGroup>
          </Strip>
          <Panels>
            <ComponentList />
            <Editor>
              <Tabs><Tab>属性编辑</Tab></Tabs>
              <Sheet>
                <PropertyTable />
                <RedBox />
              </Sheet>
            </Editor>
          </Panels>
        </Main>
      </Body>

      <StatusBar>
        <StatusCell />
        <StatusCell>层高:4.5m</StatusCell>
        <StatusCell>底标高:-0.05m</StatusCell>
        <StatusCell>0</StatusCell>
        <StatusCell>格式：级别+直径@间距，如：A10@200；当格式输入为C12/C10@200时，表示C12与C10实际间距为200</StatusCell>
        <StatusCell>321.9 FPS</StatusCell>
      </StatusBar>

      <TaskBar>
        <StartButton aria-label="开始"><Icon name="windows" /></StartButton>
        <CortanaBox>
          <Icon name="ring" size={24} />
          <CortanaInput aria-label="搜索" placeholder="在这里输入你要搜索的内容" />
          <Icon name="mic" />
        </CortanaBox>
        <TaskButton $w={50}><Icon name="taskview" /></TaskButton>
        <TaskButton $w={50}><Icon name="fan" size={22} /></TaskButton>
        <WebSearch>
          <Icon name="ie" size={18} />
          <WebInput aria-label="搜索网页和文件" placeholder="搜索网页和文件" />
          <Icon name="lens" />
        </WebSearch>
        <TaskButton $w={53}><Icon name="swirl" size={18} /></TaskButton>
        <TaskButton $on $open><Icon name="app" size={24} /></TaskButton>
        <TaskButton $open><Icon name="swirlBlue" size={24} /></TaskButton>
        <TaskButton $open><Icon name="note" size={24} /></TaskButton>
        <TaskButton $open><Icon name="book" size={24} /></TaskButton>
        <TaskButton $open><Icon name="pdf" size={24} /></TaskButton>
        <TaskScroll>
          <Icon name="chevUp" />
          <Icon name="chevDown" />
        </TaskScroll>
        <Tray>
          <TaskButton $w={44}><Icon name="people" /></TaskButton>
          <TwoLines $w={66}>31%<br />CPU使用</TwoLines>
          <Icon name="tray" />
          <Icon name="battery" />
          <Icon name="wifi" />
          <Icon name="volume" />
          <Keyboard />
          <ImeMode>A</ImeMode>
          <Icon name="sogou" />
          <TwoLines $w={80}>9:59<br />2018/11/7</TwoLines>
          <Icon name="notice" />
          <ShowDesktop aria-label="显示桌面" />
        </Tray>
      </TaskBar>
    </Page>
  )
}

export default App
